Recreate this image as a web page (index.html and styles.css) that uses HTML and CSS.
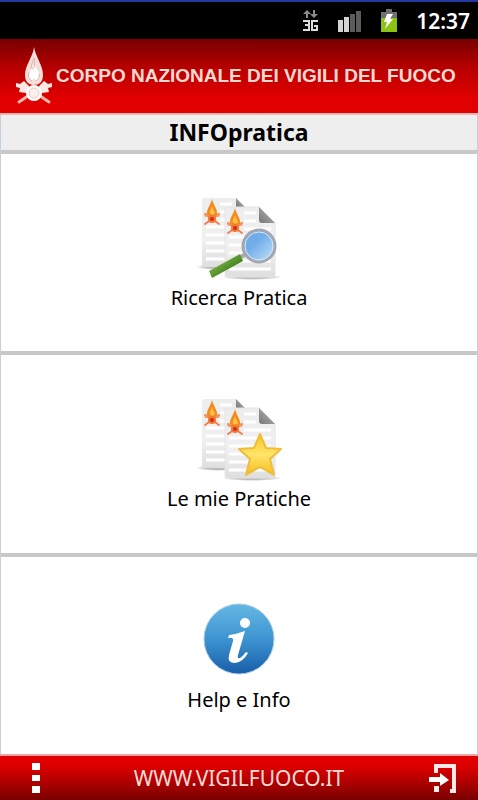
FILE: index.html
```
<!DOCTYPE html>
<html lang="it">
<head>
  <meta charset="UTF-8">
  <meta name="viewport" content="width=device-width, initial-scale=1.0">
  <title>INFOpratica</title>
  <link rel="stylesheet" href="styles.css">
</head>
<body>
  <!-- Shared drawings -->
  <svg class="defs" aria-hidden="true">
    <defs>
      <linearGradient id="paper" x1="0" y1="0" x2="0" y2="1">
        <stop offset="0" stop-color="#ededed"/>
        <stop offset="0.6" stop-color="#f0f0f0"/>
        <stop offset="1" stop-color="#dedede"/>
      </linearGradient>
      <linearGradient id="fold" x1="0" y1="1" x2="1" y2="0">
        <stop offset="0" stop-color="#777"/>
        <stop offset="1" stop-color="#bbb"/>
      </linearGradient>
      <linearGradient id="lens" x1="0" y1="0" x2="1" y2="1">
        <stop offset="0" stop-color="#6ea9e8"/>
        <stop offset="0.4" stop-color="#72aeea"/>
        <stop offset="1" stop-color="#c6e4fc"/>
      </linearGradient>
      <linearGradient id="handle" x1="0" y1="0" x2="1" y2="1">
        <stop offset="0.3" stop-color="#76b043"/>
        <stop offset="0.7" stop-color="#3f7d1c"/>
      </linearGradient>
      <linearGradient id="gold" x1="0" y1="0" x2="0" y2="1">
        <stop offset="0" stop-color="#f6c51e"/>
        <stop offset="0.5" stop-color="#ffe46a"/>
        <stop offset="1" stop-color="#f5bd20"/>
      </linearGradient>
      <linearGradient id="blue" x1="0" y1="0" x2="0" y2="1">
        <stop offset="0" stop-color="#65b8e4"/>
        <stop offset="0.5" stop-color="#3d94d1"/>
        <stop offset="1" stop-color="#1a5da9"/>
      </linearGradient>
      <radialGradient id="shadow">
        <stop offset="0.5" stop-color="#bbb"/>
        <stop offset="1" stop-color="#bbb" stop-opacity="0"/>
      </radialGradient>
      <g id="flame">
        <path d="M2 15L16 25M16 15L2 25" stroke="#f0804a" stroke-width="2" stroke-linecap="round"/>
        <path d="M1 15l4-1 1 3-4 1zM17 15l-4-1-1 3 4 1z" fill="#f4955a"/>
        <path d="M9 0C8 5 4 10 4 13C4 17 7 18 9 18C12 18 14 17 14 13C14 10 10 5 9 0Z" fill="#f58a1c"/>
        <path d="M9 7C8 11 6 12 7 14C8 16 11 16 12 14C12 12 10 11 9 7Z" fill="#ffc04a"/>
        <circle cx="9" cy="20" r="4" fill="#f1783a"/>
        <circle cx="9" cy="20" r="2" fill="#d62c0c"/>
      </g>
      <g id="docs">
        <ellipse cx="24" cy="73" rx="22" ry="3" fill="url(#shadow)"/>
        <path d="M11 4H42L51 13V73H11Q8 73 8 70V7Q8 4 11 4Z" fill="url(#paper)"/>
        <path d="M42 4L51 13H42Z" fill="url(#fold)"/>
        <path d="M12 33H32M12 41H32M12 49H32M12 57H32M12 65H32M26 10H38M26 18H34M26 26H34" stroke="#fff" stroke-width="3"/>
        <use href="#flame" x="9" y="5"/>
        <ellipse cx="58" cy="83" rx="30" ry="3" fill="url(#shadow)"/>
        <path d="M34 13H65L81 29V80Q81 83 78 83H34Q31 83 31 80V16Q31 13 34 13Z" fill="url(#paper)" stroke="#e4e4e4" stroke-width="1"/>
        <path d="M65 13L81 29H68Q65 29 65 26Z" fill="url(#fold)"/>
        <path d="M35 43H77M35 51H77M35 59H77M35 67H77M35 75H77M50 19H62M50 27H62M50 35H77" stroke="#fff" stroke-width="3"/>
        <use href="#flame" x="32" y="14"/>
      </g>
    </defs>
  </svg>

  <div class="screen">
    <!-- Status bar -->
    <div class="status">
      <svg width="18" height="24" viewBox="0 0 18 24" role="img" aria-label="3G">
        <path d="M5 1L9 5H6V9H4V5H1ZM12 9L8 5H11V1H13V5H16Z" fill="#8c8c8c"/>
        <path d="M1 12H7V21H1M3 16H7M16 12H10V21H15V17H12" fill="none" stroke="#ddd" stroke-width="2"/>
      </svg>
      <svg width="24" height="22" viewBox="0 0 24 22" role="img" aria-label="Segnale">
        <path d="M0 10H5V22H0ZM6 7H11V22H6Z" fill="#d4d4d4"/>
        <path d="M12 4H17V22H12ZM18 1H23V22H18Z" fill="#5c5c5c"/>
      </svg>
      <svg width="18" height="24" viewBox="0 0 18 24" role="img" aria-label="Batteria">
        <path d="M6 0H12V3H17V10H1V3H6Z" fill="#6f7270"/>
        <path d="M1 9H17V23H1Z" fill="#8cc414"/>
        <path d="M7 5H13L10 10H13L5 20L7 13H4Z" fill="#fff"/>
      </svg>
      <span class="clock">12:37</span>
    </div>

    <header class="header">
      <svg class="logo" width="36" height="58" viewBox="0 0 36 58" aria-hidden="true">
        <path d="M3 55L28 38M33 55L8 38" stroke="#f5b5a8" stroke-width="3" stroke-linecap="round"/>
        <path d="M0 36L4 37L8 34L13 39L10 46L3 45L4 41L0 40ZM36 36L32 37L28 34L23 39L26 46L33 45L32 41L36 40Z" fill="#ffe8e2"/>
        <path d="M18 0C17 10 9 18 9 28C9 36 14 38 18 38C23 38 27 35 27 28C27 18 20 11 18 0Z" fill="#f6dfda"/>
        <path d="M18 15C18 21 12 24 13 30C14 34 16 34 18 31C20 35 24 32 23 27C22 22 19 21 18 15Z" fill="#fff"/>
        <path d="M18 11C17 16 14 18 16 22C19 21 19 16 18 11ZM13 25C12 29 13 33 16 34M23 27C24 31 21 33 20 34" fill="none" stroke="#d9b5af" stroke-width="1"/>
        <circle cx="18" cy="46" r="8" fill="#fff"/>
        <circle cx="18" cy="46" r="5" fill="#fbefec" stroke="#eecac4"/>
      </svg>
      <span class="brand">CORPO NAZIONALE DEI VIGILI DEL FUOCO</span>
    </header>

    <h1 class="title">INFOpratica</h1>

    <!-- Main menu -->
    <main class="menu">
      <button class="tile" type="button">
        <svg width="90" height="90" viewBox="0 0 90 90" aria-hidden="true">
          <use href="#docs"/>
          <path d="M47 63L53 59" stroke="#aaa" stroke-width="4"/>
          <path d="M15 77L46 60L49 67L18 84Z" fill="url(#handle)"/>
          <circle cx="65" cy="52" r="16" fill="url(#lens)" stroke="#a3a8b0" stroke-width="3"/>
          <circle cx="65" cy="52" r="14" fill="none" stroke="#d8e8f8" stroke-width="1"/>
        </svg>
        <span>Ricerca Pratica</span>
      </button>
      <button class="tile" type="button">
        <svg width="90" height="90" viewBox="0 0 90 90" aria-hidden="true">
          <use href="#docs"/>
          <path d="M66 39L72 53L87 54L76 64L80 80L66 72L52 80L56 64L45 54L60 53Z" fill="url(#gold)" stroke="#efbd3a" stroke-width="2" stroke-linejoin="round"/>
        </svg>
        <span>Le mie Pratiche</span>
      </button>
      <button class="tile" type="button">
        <svg width="90" height="90" viewBox="0 0 90 90" aria-hidden="true">
          <circle cx="45" cy="43" r="35" fill="url(#blue)" stroke="#a4cbe5" stroke-width="1"/>
          <circle cx="51" cy="27" r="5" fill="#fff"/>
          <path d="M35 39Q43 38 51 35L44 59Q43 63 46 62Q49 60 52 56L54 57Q49 66 41 67Q33 67 35 59L39 45Q40 41 34 42Z" fill="#fff"/>
        </svg>
        <span>Help e Info</span>
      </button>
    </main>

    <footer class="footer">
      <button class="icon-button" type="button" aria-label="Menu">
        <svg width="8" height="30" viewBox="0 0 8 30">
          <path d="M0 0H8V7H0ZM0 12H8V18H0ZM0 23H8V30H0Z" fill="#fff"/>
        </svg>
      </button>
      <a class="site" href="#">WWW.VIGILFUOCO.IT</a>
      <button class="icon-button" type="button" aria-label="Esci">
        <svg width="28" height="30" viewBox="0 0 28 30">
          <path d="M8 10V3H26V28H22" fill="none" stroke="#ffe9e6" stroke-width="4"/>
          <path d="M6 23H11V29H6Z" fill="#ffe9e6"/>
          <path d="M1 14H12V10L21 17L12 23V19H1Z" fill="#fff"/>
        </svg>
      </button>
    </footer>
  </div>
</body>
</html>
```
FILE: styles.css
```
* {
  box-sizing: border-box;
}
body {
  margin: 0;
  font-family: "Noto Sans", "Open Sans", sans-serif;
  background: #fff;
  color: #000;
}
button {
  padding: 0;
  border: none;
  background: none;
  font: inherit;
  color: inherit;
  cursor: pointer;
}
svg {
  display: block;
  flex: none;
}
.defs {
  position: absolute;
  width: 0;
  height: 0;
}
.screen {
  display: flex;
  flex-direction: column;
  min-height: 100vh;
}

/* Status bar */
.status {
  display: flex;
  align-items: center;
  justify-content: flex-end;
  gap: 18px;
  height: 39px;
  padding-right: 8px;
  border-top: 2px solid #2338a0;
  background: #000;
}
.clock {
  font-size: 21px;
  font-weight: 600;
  line-height: 24px;
  color: #fff;
}

/* Header */
.header {
  display: flex;
  align-items: center;
  gap: 4px;
  height: 76px;
  padding-left: 16px;
  border-bottom: 2px solid #f0b4b4;
  background: linear-gradient(#780000, #b80000 40%, #e00000 80%);
}
.brand {
  font-family: "Liberation Sans", Arial, sans-serif;
  font-size: 19px;
  font-weight: bold;
  white-space: nowrap;
  color: #ffd9d2;
}
.title {
  margin: 0;
  border: 1px solid #c5d0dc;
  border-width: 0 1px;
  background: #eee;
  font-size: 23px;
  font-weight: bold;
  line-height: 35px;
  text-align: center;
}

/* Menu */
.menu {
  flex: 1;
  display: grid;
  grid-template-rows: repeat(3, 1fr);
  border: 1px solid #c5d0dc;
  border-width: 0 1px;
}
.tile {
  display: flex;
  flex-direction: column;
  align-items: center;
  justify-content: center;
  border-top: 4px solid #c8c8c8;
  font-size: 20px;
  line-height: 28px;
}

/* Footer */
.footer {
  display: flex;
  align-items: center;
  justify-content: space-between;
  height: 46px;
  padding: 0 20px;
  border-top: 2px solid #f0a4a4;
  background: linear-gradient(#e00000 20%, #a80000 65%, #780000);
}
.icon-button {
  display: flex;
  align-items: center;
  justify-content: center;
  width: 32px;
  height: 40px;
}
.site {
  font-size: 21px;
  color: #ffdcd8;
  text-decoration: none;
}
```
